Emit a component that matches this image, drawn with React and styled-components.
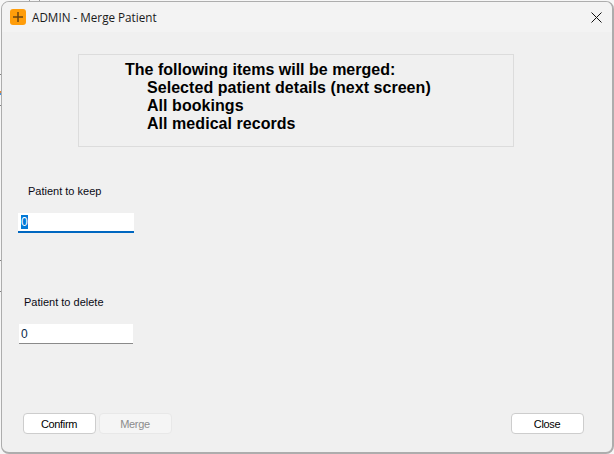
import styled, { createGlobalStyle } from "styled-components";
import { useEffect, useRef } from "react";

const GlobalStyle = createGlobalStyle`
    html, body {
        margin: 0;
        padding: 0;
        background: #f6f6f6;
    }
`

// the app behind the dialog only shows as a few pixels round its edge
const tick = (color, x, y, w, h) =>
    `linear-gradient(${color}, ${color}) ${x}px ${y}px / ${w}px ${h}px no-repeat`

const Backdrop = styled.div`
    width: 614px;
    height: 454px;
    padding: 1px 0 0 1px;
    box-sizing: border-box;
    background:
        ${tick("#808080", 0, 74, 1, 1)},
        ${tick("#e0883a", 0, 91, 1, 2)},
        ${tick("#4a90d9", 0, 93, 1, 2)},
        ${tick("#808080", 0, 105, 1, 1)},
        ${tick("#808080", 0, 260, 1, 1)},
        ${tick("#808080", 0, 291, 1, 1)},
        ${tick("#808080", 612, 74, 2, 1)},
        ${tick("#808080", 612, 105, 2, 1)},
        ${tick("#9a9a9a", 29, 0, 1, 1)},
        ${tick("#9a9a9a", 39, 0, 1, 1)},
        #f6f6f6;
`

const DialogWindow = styled.div`
    box-sizing: border-box;
    width: 613px;
    height: 453px;
    display: flex;
    flex-direction: column;
    background: #f0f0f0;
    border: 1px solid #adadad;
    border-right-width: 2px;
    border-bottom-width: 2px;
    border-radius: 8px;
    overflow: hidden;
    font-family: "Liberation Sans", Arial, sans-serif;
    color: #000;
`

const TitleBar = styled.div`
    flex: none;
    height: 30px;
    display: flex;
    align-items: center;
    padding: 0 10px 0 8px;
    background: #f3f3f3;
`

const AppIcon = styled.svg`
    width: 16px;
    height: 16px;
    margin-right: 6px;
`

const Title = styled.div`
    flex: 1;
    font-family: "Open Sans", "Liberation Sans", sans-serif;
    font-size: 11.7px;
    color: #1a1a1a;
`

const CloseGlyph = styled.svg`
    width: 11px;
    height: 11px;
`

const Body = styled.div`
    flex: 1;
    display: flex;
    flex-direction: column;
    padding: 22px 28px 18px 16px;
`

const Notice = styled.div`
    box-sizing: border-box;
    width: 436px;
    height: 93px;
    margin-left: 60px;
    padding: 6px 0 0 46px;
    border: 1px solid #dcdcdc;
    font-size: 16px;
    font-weight: bold;
    line-height: 18px;
`

const NoticeItem = styled.div`
    padding-left: 22px;
    letter-spacing: 0.05px;
`

const Field = styled.div`
    display: flex;
    flex-direction: column;
    margin-top: ${(p) => p.$top}px;
`

const FieldLabel = styled.label`
    font-size: 11px;
    line-height: 14px;
    margin-left: ${(p) => p.$indent}px;
    margin-bottom: 15px;
    color: #0a0a14;
`

const NumberInput = styled.input`
    box-sizing: border-box;
    width: ${(p) => (p.$focused ? 116 : 114)}px;
    height: 20px;
    margin-left: ${(p) => (p.$focused ? 0 : 1)}px;
    padding: 0 0 0 ${(p) => (p.$focused ? 3 : 2)}px;
    border: 0;
    border-bottom: ${(p) => (p.$focused ? "2px solid #0067c0" : "1px solid #8a8a8a")};
    outline: none;
    background: #fff;
    font-family: "Liberation Sans", Arial, sans-serif;
    font-size: 12px;
    color: #0a2a4a;

    &::selection {
        background: #0078d7;
        color: #fff;
    }
`

const ButtonRow = styled.div`
    margin-top: auto;
    display: flex;
    gap: 3px;
    padding-left: 5px;
`

const Spacer = styled.div`
    flex: 1;
`

const DialogButton = styled.button`
    box-sizing: border-box;
    width: 73px;
    height: 21px;
    padding: 0 1px 0 0;
    border: 1px solid ${(p) => (p.disabled ? "#e8e8e8" : "#cdcdcd")};
    border-radius: 4px;
    background: ${(p) => (p.disabled ? "#f5f5f5" : "#fff")};
    font-family: "Liberation Sans", Arial, sans-serif;
    font-size: 11px;
    letter-spacing: -0.35px;
    color: ${(p) => (p.disabled ? "#8c8c8c" : "#000")};
`

function App() {
    const keepRef = useRef(null)

    // first field opens focused with its value selected
    useEffect(() => {
        keepRef.current.focus()
        keepRef.current.select()
    }, [])

    return (
        <>
            <GlobalStyle />
            <Backdrop>
                <DialogWindow>
                    <TitleBar>
                        <AppIcon viewBox="0 0 16 16">
                            <rect width="16" height="16" rx="3" fill="#ff9d0a" />
                            <path d="M8 3v10M3 8h10" stroke="#6b4510" strokeWidth="1.5" />
                        </AppIcon>
                        <Title>ADMIN - Merge Patient</Title>
                        <CloseGlyph viewBox="0 0 11 11">
                            <path d="M.5.5l10 10M10.5.5l-10 10" stroke="#111" strokeWidth="1" fill="none" />
                        </CloseGlyph>
                    </TitleBar>
                    <Body>
                        <Notice>
                            The following items will be merged:
                            <NoticeItem>Selected patient details (next screen)</NoticeItem>
                            <NoticeItem>All bookings</NoticeItem>
                            <NoticeItem>All medical records</NoticeItem>
                        </Notice>
                        <Field $top={37}>
                            <FieldLabel $indent={10}>Patient to keep</FieldLabel>
                            <NumberInput ref={keepRef} $focused defaultValue="0" />
                        </Field>
                        <Field $top={62}>
                            <FieldLabel $indent={6}>Patient to delete</FieldLabel>
                            <NumberInput defaultValue="0" />
                        </Field>
                        <ButtonRow>
                            <DialogButton>Confirm</DialogButton>
                            <DialogButton disabled>Merge</DialogButton>
                            <Spacer />
                            <DialogButton>Close</DialogButton>
                        </ButtonRow>
                    </Body>
                </DialogWindow>
            </Backdrop>
        </>
    );
}

export default App;
